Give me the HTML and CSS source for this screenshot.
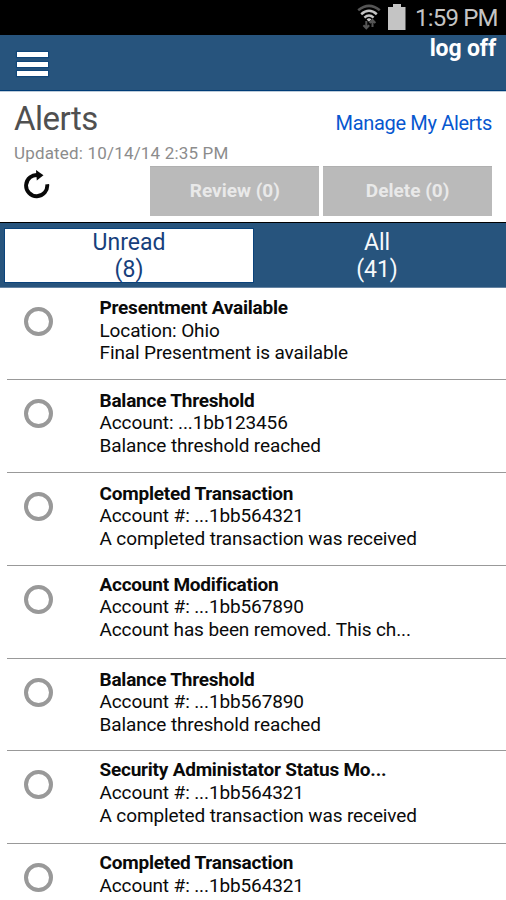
FILE: index.html
```html
<!DOCTYPE html>
<html lang="en">
<head>
<meta charset="utf-8">
<title>Alerts</title>
<link rel="stylesheet" href="styles.css">
</head>
<body>
<div class="status">
  <svg class="wifi" width="24" height="26" viewBox="0 0 24 26" fill="none">
    <path d="M1.2 6.3Q12 -2.5 22.8 6.3" stroke="#555" stroke-width="2.6"/>
    <path d="M4.2 10.2Q12 3.4 19.8 10.2" stroke="#c4c4c4" stroke-width="2.5"/>
    <path d="M7.4 13.6Q12 9.4 16.6 13.6" stroke="#c4c4c4" stroke-width="2.4"/>
    <path d="M9.6 15.4Q12 13.2 14.4 15.4L12 17.8Z" fill="#c4c4c4"/>
    <path d="M9.3 17V24M6.4 21.3L9.3 24.3L12.2 21.3M15.5 23V16.5M12.6 19L15.5 16L18.4 19" stroke="#555" stroke-width="2"/>
  </svg>
  <svg class="battery" width="18" height="26" viewBox="0 0 18 26"><path d="M5 0H13V3H17.5V26H0V3H5Z" fill="#c4c4c4"/></svg>
  <span class="time">1:59 PM</span>
</div>
<header class="topbar">
  <div class="menu"><i></i><i></i><i></i></div>
  <a class="logoff">log off</a>
</header>
<section class="head">
  <div class="titles">
    <h1>Alerts</h1>
    <a class="manage">Manage My Alerts</a>
  </div>
  <p class="updated">Updated: 10/14/14 2:35 PM</p>
  <div class="actions">
    <svg class="refresh" width="28" height="30" viewBox="0 0 28 30"><path d="M14.5 5.2A10.6 10.6 0 1 0 23.2 14.3" fill="none" stroke="#080808" stroke-width="3.9"/><path d="M12 0L19.5 5.2L12.8 10.4Z" fill="#080808"/></svg>
    <button>Review (0)</button>
    <button>Delete (0)</button>
  </div>
</section>
<nav class="tabs">
  <div class="tab active"><span>Unread</span><span>(8)</span></div>
  <div class="tab"><span>All</span><span>(41)</span></div>
</nav>
<main class="list">
  <article class="row"><i class="radio"></i><div class="text"><b>Presentment Available</b><span>Location: Ohio</span><span>Final Presentment is available</span></div></article>
  <article class="row"><i class="radio"></i><div class="text"><b>Balance Threshold</b><span>Account: ...1bb123456</span><span>Balance threshold reached</span></div></article>
  <article class="row"><i class="radio"></i><div class="text"><b>Completed Transaction</b><span>Account #: ...1bb564321</span><span>A completed transaction was received</span></div></article>
  <article class="row raised"><i class="radio"></i><div class="text"><b>Account Modification</b><span>Account #: ...1bb567890</span><span>Account has been removed. This ch...</span></div></article>
  <article class="row lowered"><i class="radio"></i><div class="text"><b>Balance Threshold</b><span>Account #: ...1bb567890</span><span>Balance threshold reached</span></div></article>
  <article class="row raised"><i class="radio"></i><div class="text"><b>Security Administator Status Mo...</b><span>Account #: ...1bb564321</span><span>A completed transaction was received</span></div></article>
  <article class="row raised"><i class="radio"></i><div class="text"><b>Completed Transaction</b><span>Account #: ...1bb564321</span></div></article>
</main>
</body>
</html>
```
FILE: styles.css
```css
* { box-sizing: border-box; }
body { margin: 0; height: 900px; overflow: hidden; background: #fff; color: #0a0a0a; font-family: Roboto, "Liberation Sans", sans-serif; }
.status { height: 35px; background: #000; display: flex; justify-content: flex-end; padding: 4px 9px 0 0; color: #c4c4c4; }
.wifi { margin-right: 7px; }
.battery { margin-right: 9px; }
.time { width: 82px; font-size: 24px; line-height: 28px; letter-spacing: -.8px; white-space: nowrap; }
.topbar { height: 56px; background: #27547d; border-bottom: 1px solid #003c76; display: flex; justify-content: space-between; padding: 0 10px 0 17px; }
.menu { padding-top: 17px; display: flex; flex-direction: column; gap: 4.5px; }
.menu i { width: 31px; height: 5px; background: #fff; box-shadow: 0 0 1px 1px #0f467a; }
.logoff { color: #fff; font-weight: 700; font-size: 23px; line-height: 27px; letter-spacing: -.15px; }
.head { height: 131px; padding: 0 14px; border-top: 1px solid #bdccda; }
.titles { display: flex; justify-content: space-between; height: 52px; }
h1 { margin: 0; font-weight: 400; font-size: 33px; line-height: 53px; letter-spacing: -.5px; color: #505050; }
.manage { color: #0757cf; font-size: 20px; line-height: 63px; letter-spacing: -.32px; }
.updated { margin: 0; height: 21.5px; font-size: 17px; line-height: 18px; letter-spacing: .18px; color: #8c8c8c; }
.actions { display: flex; gap: 4px; }
.refresh { margin: 4px 94.5px 0 10px; }
button { width: 169px; height: 50.5px; padding: 0 0 2px; border: 0; border-top: 1px solid #b0b0b0; background: #bababa; color: #e9e9e9; font: 700 19px Roboto, sans-serif; }
.tabs { height: 65.5px; border-top: 1px solid #000; border-bottom: 1px solid #6584a3; background: #27547d; display: flex; padding: 6px 5px 5px; }
.tab { width: 248px; display: flex; flex-direction: column; align-items: center; color: #f5f8fb; font-size: 23px; line-height: 27px; }
.tab.active { background: #fff; color: #173f7c; box-shadow: 0 0 0 1px #0b437b; }
.list { padding-left: 7px; }
.row { height: 92.8px; border-bottom: 1.5px solid #999; display: flex; padding-left: 16.5px; }
.radio { width: 29px; height: 29px; margin: 19px 47px 0 0; border: 4px solid #999; border-radius: 50%; }
.text { padding-top: 9.5px; display: flex; flex-direction: column; font-size: 19px; line-height: 22.6px; letter-spacing: -.12px; white-space: nowrap; }
.text b { letter-spacing: -.23px; }
.raised .text { padding-top: 8px; }
.lowered .text { padding-top: 10px; }
```
